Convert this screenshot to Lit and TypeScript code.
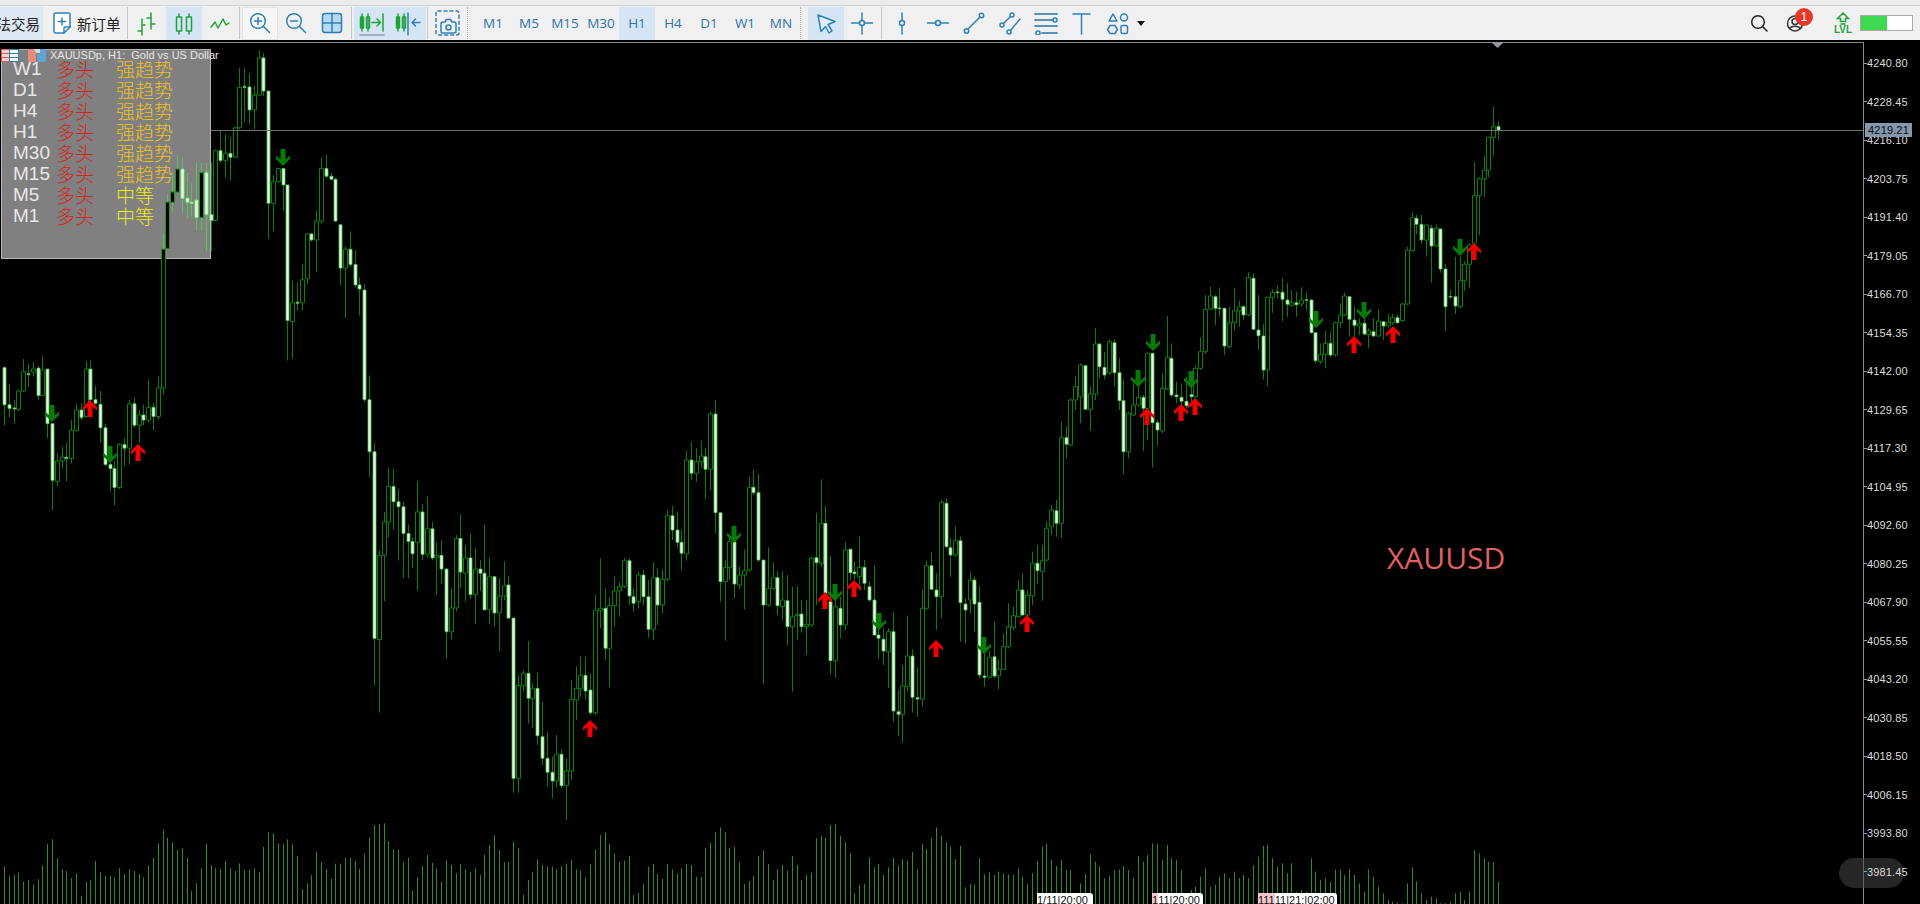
import { LitElement, css, html, svg } from "lit";
import { customElement } from "lit/decorators.js";

// Candles are traced from the reference. Each segment has its own y scale:
// page y = offset + value / scale. Rows are "kind top bottom high low".
const SEGMENTS = [
  {
    offset: 40,
    scale: 1.96,
    rows: "w 642 715 640 755;w 715 722 675 740;w 721 723 705 752;b 688 724 685 727;b 650 688 625 690;w 654 656 635 680;b 645 651 632 660;w 643 697 640 705;b 647 697 620 697;w 645 752 645 780;w 752 863 752 922;b 825 865 810 875;b 818 825 797 838;w 818 820 790 865;b 765 820 745 830;b 725 765 712 768;w 725 740 712 745;b 645 738 630 740;w 645 705 628 720;w 705 712 678 715;w 714 760 688 790;w 760 832 752 835;w 832 840 815 885;w 840 877 825 912;b 793 877 790 880;w 793 800 780 835;b 713 800 705 832;w 713 755 700 760;b 735 755 725 790;w 735 745 715 755;b 720 745 665 750;w 720 738 712 765;b 682 738 660 745;b 410 682 380 695;b 318 408 300 408;b 298 318 265 340;b 253 298 225 298;w 253 310 230 340;w 310 318 260 350;w 318 320 280 345;w 314 348 240 375;b 260 348 240 375;w 260 342 240 415;w 342 354 240 415;b 217 354 215 356;w 217 236 178 240;b 222 236 185 270;w 222 230 190 275;b 172 230 170 232;b 93 172 55 175;w 91 93 55 160;w 92 137 65 165;b 108 137 90 175;b 35 108 20 108;w 35 100 25 110;w 100 320 100 390;b 278 320 265 375;b 252 278 250 280;w 252 284 252 335;w 284 550 284 628;b 515 552 472 625;w 514 516 475 530;b 470 515 440 530;b 380 468 378 478;w 380 392 378 395;b 355 392 335 455;b 252 355 230 360;w 252 267 225 270;w 267 273 260 275;w 273 355 270 357;w 362 447 362 480;b 410 447 405 545;w 410 440 375 445;w 440 480 412 485;w 480 488 465 540;w 490 705 478 710;w 705 807 658 857;w 807 1173 790 1265;b 1010 1175 1000 1318;b 945 1010 925 1100;b 875 945 838 975;w 875 905 840 960;w 905 915 880 1020;w 915 967 905 1055;w 967 983 950 1055;w 983 1007 975 1035;b 925 985 865 1078;w 925 1008 910 1020;b 958 1008 895 1015;w 958 1015 945 1020;b 1010 1014 985 1088;w 1010 1037 980 1065;w 1037 1160 1035 1212;b 1113 1160 1075 1175;b 977 1113 970 1120;w 977 1043 930 1075;b 1015 1045 990 1100;w 1015 1087 968 1095;b 1037 1087 995 1145;w 1037 1045 1020 1080;w 1045 1117 950 1115;b 1052 1117 1015 1145;w 1052 1123 1050 1150;b 1090 1123 1055 1198;b 1070 1090 1022 1098;w 1068 1133 1050 1135;w 1133 1447 1133 1475;b 1265 1447 1245 1475",
  },
  {
    offset: 380,
    scale: 3,
    rows: "b 880 918 870 935;w 880 955 783 1030;b 925 955 910 1045;w 925 1067 878 1095;w 1070 1135 965 1155;w 1135 1177 1055 1220;w 1177 1203 1130 1255;b 1123 1203 1065 1222;w 1123 1217 1108 1225;b 1173 1217 1135 1320;b 958 1173 900 1200;b 925 960 860 1020;b 886 925 828 950;w 886 933 830 960;w 930 998 880 1005;b 690 998 645 1005;b 685 692 535 745;w 685 805 625 840;b 677 805 652 922;b 633 677 590 740;b 620 632 605 710;b 542 620 533 625;w 542 648 535 675;w 650 670 625 695;b 585 665 575 685;w 585 650 570 675;w 650 748 600 772;b 593 748 547 780;w 593 675 565 735;b 598 675 570 700;b 407 598 390 605;w 407 450 378 480;w 450 487 395 505;w 487 520 450 570;b 240 522 212 542;w 240 280 187 300;b 245 280 205 305;b 228 245 182 265;w 230 268 205 358;b 102 268 95 330;w 102 398 60 460;w 398 605 398 665;b 562 605 540 782;b 485 562 470 600;w 485 612 440 655;b 585 615 560 628;b 572 585 508 688;b 322 570 290 575;w 322 338 270 345;w 338 540 282 545;w 540 675 540 912;b 625 675 502 680;b 593 625 548 630;w 593 677 575 705;b 660 680 573 722;w 662 740 585 795;b 710 740 620 935;b 703 707 620 780;w 702 740 660 758;b 733 740 660 825;b 535 735 530 740;w 533 548 398 675;b 430 550 298 560;w 430 640 378 665;w 665 842 528 882;b 680 842 640 892;w 685 735 650 775;b 510 735 487 750;w 508 578 505 600;w 576 581 545 600;b 562 590 470 630;w 562 610 540 630;w 620 660 605 665;w 660 765 555 768;w 765 775 700 838;w 778 813 745 855;b 755 815 745 925;w 755 993 695 1025;w 995 1003 930 1068;b 918 1003 855 1088;b 828 920 707 935;w 828 952 808 998;w 953 957 862 1010;b 685 958 630 980;b 557 685 542 690;w 557 628 517 630;w 630 650 580 750;b 367 650 360 715;w 370 500 355 505;w 503 525 475 590;b 482 525 438 530;w 482 668 470 785;w 672 690 655 790;b 600 660 575 700;w 600 672 590 755;w 667 885 617 895;w 888 892 800 920;b 832 892 812 895;w 830 888 725 895;b 868 888 838 928;b 800 868 760 870;b 740 800 670 805;b 707 742 680 750;b 630 710 600 712",
  },
  {
    offset: 240,
    scale: 3,
    rows: "w 1050 1125 1000 1127;b 1065 1125 1050 1130;b 970 1067 935 1095;w 970 992 915 1030;b 962 994 915 1082;b 865 960 845 965;b 810 860 795 885;w 812 850 780 890;b 593 850 545 895;w 593 613 560 655;b 480 615 475 618;b 440 480 410 510;b 375 470 370 550;w 377 508 375 510;b 462 508 440 573;b 312 462 265 480;w 312 380 310 415;w 382 405 335 418;b 305 398 298 405;w 308 398 298 440;w 398 482 355 510;w 482 635 418 703;b 520 635 515 655;b 495 525 430 528;b 472 495 400 500;w 472 505 465 633;b 340 505 338 600;w 340 548 338 682;w 548 570 540 618;b 445 573 400 580;b 352 447 228 450;w 355 465 310 470;w 465 470 425 490;w 472 484 430 495;w 484 497 410 505;w 464 470 420 500;b 385 470 375 475;b 335 385 292 390;b 208 335 165 342;b 168 207 140 210;w 170 205 165 255;w 204 206 143 230;w 205 318 205 345;b 248 320 200 325;b 212 248 145 270;b 200 213 182 260;w 200 225 195 240;b 113 225 97 228;w 115 268 100 270;w 270 287 165 328;w 288 390 252 418;b 172 390 170 438;b 157 172 147 218;w 156 158 135 175;w 157 178 115 243;w 180 193 130 230;b 188 196 152 200;w 188 194 155 230;b 180 192 142 200;w 179 181 155 210;w 180 278 178 280;w 278 362 278 368;b 343 365 310 372;b 310 343 273 385;w 310 345 275 352;b 248 345 245 350;b 225 248 190 265;b 168 225 158 228;w 170 238 168 290;w 240 256 200 290;b 250 258 235 285;w 250 282 225 285;b 272 284 265 325;w 275 288 235 290;b 243 288 210 290;w 245 258 245 300;b 248 258 222 262;b 233 248 222 255;w 233 248 225 252;b 192 242 188 245;b 30 192 20 195",
  },
  {
    offset: 90,
    scale: 3,
    rows: "b 383 482 367 485;w 385 403 375 432;w 403 450 375 462;b 405 450 405 500;w 415 468 405 578;b 415 468 403 470;w 417 537 415 548;w 537 650 522 722;w 619 621 600 627;w 620 648 500 672;b 572 650 500 655;b 523 572 513 602;b 465 523 460 595;b 317 460 217 460;b 266 317 262 435;b 241 267 198 320;b 142 241 140 262;b 110 142 50 197;w 110 120 95 150",
  },
];

// Tops of the volume bars: y = 800 + value / 3
const VOLUMES = [
  200, 228, 224, 218, 245, 240, 254, 238, 196, 132, 118, 175, 208, 213, 235, 220, 288, 245, 240, 183, 217, 228, 228, 232, 205, 222, 208, 213, 222, 232, 196, 173, 130, 90, 113, 128, 150, 145, 173, 273, 250, 205, 132, 196, 205, 207, 183, 205, 213, 190, 210, 210, 205, 217, 140, 97, 100, 130, 133, 118, 133, 168, 267, 250, 225, 155, 186, 207, 237, 191, 191, 175, 173, 182, 207, 162, 113, 75, 72, 70, 123, 148, 150, 187, 173, 272, 232, 198, 165, 188, 205, 245, 181, 195, 220, 193, 208, 217, 205, 225, 165, 135, 106, 150,
  187, 185, 125, 145, 285, 240, 217, 178, 195, 200, 200, 208, 198, 191, 180, 208, 212, 232, 192, 148, 105, 97, 132, 160, 185, 182, 168, 285, 278, 252, 200, 192, 223, 237, 192, 208, 220, 205, 192, 195, 230, 232, 145, 130, 97, 82, 97, 145, 140, 187, 252, 243, 228, 168, 152, 192, 240, 208, 195, 213, 168, 195, 240, 225, 218, 115, 108, 113, 75, 73, 108, 126, 160, 280, 255, 252, 172, 202, 192, 225, 202, 173, 196, 177, 182, 155, 208, 132, 147, 115, 82, 108, 127, 140, 178, 137, 262, 253, 254, 175, 223, 217, 225, 215,
  220, 223, 225, 205, 230, 252, 220, 183, 140, 132, 180, 198, 180, 210, 210, 280, 250, 222, 162, 185, 200, 235, 228, 210, 208, 198, 210, 233, 168, 185, 165, 130, 132, 180, 135, 175, 180, 210, 280, 270, 260, 230, 205, 260, 255, 230, 220, 235, 215, 235, 225, 235, 195, 170, 137, 135, 175, 200, 190, 220, 190, 275, 270, 275, 175, 215, 240, 235, 245, 208, 210, 225, 208, 225, 250, 275, 208, 230, 260, 280, 300, 305, 308, 310, 250, 202, 245, 280, 300, 290, 295, 310, 310, 305, 280, 275, 300, 275, 150, 160, 175, 185, 185, 245,
];

// x, top of the arrow, all in page pixels
const UP_ARROWS = [[90, 400], [138, 444], [590, 720], [825, 592], [854, 580], [936, 640], [1027, 615], [1147, 408], [1181, 404], [1195, 398], [1354, 336], [1393, 326], [1474, 243]];
const DOWN_ARROWS = [[52, 405], [110, 446], [283, 149], [734, 526], [835, 584], [879, 613], [984, 637], [1138, 370], [1153, 334], [1191, 371], [1316, 311], [1364, 302], [1460, 239]];

const PRICES = ["4240.80", "4228.45", "4216.10", "4203.75", "4191.40", "4179.05", "4166.70", "4154.35", "4142.00", "4129.65", "4117.30", "4104.95", "4092.60", "4080.25", "4067.90", "4055.55", "4043.20", "4030.85", "4018.50", "4006.15", "3993.80", "3981.45"];

const TRENDS = [
  ["W1", "强趋势"],
  ["D1", "强趋势"],
  ["H4", "强趋势"],
  ["H1", "强趋势"],
  ["M30", "强趋势"],
  ["M15", "强趋势"],
  ["M5", "中等"],
  ["M1", "中等"],
];

const TIME_TAGS = [
  { left: 1037, width: 56, pink: "", text: "1/11|20:00" },
  { left: 1152, width: 51, pink: "1", text: "11|20:00" },
  { left: 1258, width: 79, pink: "111", text: "11|21:|02:00" },
];

const PANEL = { x: 2, y: 49, w: 209, h: 209 };

function buildPaths() {
  let wicks = "";
  let bull = "";
  let bear = "";
  let i = 0;
  for (const seg of SEGMENTS) {
    const y = (v: number) => (seg.offset + Number(v) / seg.scale).toFixed(1);
    for (const row of seg.rows.split(";")) {
      const [kind, top, bottom, high, low] = row.split(" ");
      const x = Math.round(4 + 4.804 * i) + 0.5;
      wicks += `M${x} ${y(+high)}V${y(+top)}M${x} ${y(+bottom)}V${y(+low)}`;
      if (kind === "b") bull += `M${x - 2} ${y(+top)}h4V${y(+bottom)}h-4z`;
      else bear += `M${x - 1.5} ${y(+top)}h3V${y(+bottom)}h-3z`;
      i++;
    }
  }
  return { wicks, bull, bear };
}

function buildVolumes() {
  return VOLUMES.map((top, i) => {
    const x = Math.round(4 + 4.804 * i) + 0.5;
    return `M${x} ${(800 + top / 3).toFixed(1)}V904`;
  }).join("");
}

const PATHS = buildPaths();
const VOLUME_PATH = buildVolumes();

const arrowUp = ([x, t]: number[]) =>
  `M${x} ${t}L${x + 7} ${t + 7}V${t + 10.5}L${x + 2.5} ${t + 6.5}V${t + 17}H${x - 2.5}V${t + 6.5}L${x - 7} ${t + 10.5}V${t + 7}Z`;
const arrowDown = ([x, t]: number[]) =>
  `M${x} ${t + 17}L${x + 7} ${t + 10}V${t + 6.5}L${x + 2.5} ${t + 10.5}V${t}H${x - 2.5}V${t + 10.5}L${x - 7} ${t + 6.5}V${t + 10}Z`;

const BLUE = "#2f80b8";
const GREEN = "#1fa33a";

const icon = (content: unknown, size = 24) =>
  html`<svg width=${size} height=${size} viewBox="0 0 ${size} ${size}" fill="none" stroke-width="1.5" stroke-linecap="round" stroke-linejoin="round">${content}</svg>`;

const ICONS = {
  order: icon(svg`<path d="M6 2h12a2 2 0 0 1 2 2v12l-6 6H6a2 2 0 0 1-2-2V4a2 2 0 0 1 2-2z" stroke=${BLUE} fill="#fff"/><path d="M14 22v-5a1 1 0 0 1 1-1h5" stroke=${BLUE}/><path d="M12 7v7M8.500 10.500h7" stroke=${BLUE}/>`),
  bars: icon(svg`<path d="M7 9v16M3 21h4M7 15h3M16 3v16M12 8h4M16 14h4" stroke=${GREEN}/>`, 26),
  candles: icon(svg`<path d="M7 3v20M17 3v20" stroke=${GREEN}/><rect x="4.500" y="6" width="5" height="14" fill="#d6e5f3" stroke=${GREEN}/><rect x="14.500" y="6" width="5" height="14" fill="#d6e5f3" stroke=${GREEN}/>`),
  line: icon(svg`<path d="M3 16l4-5 3 6 5-9 3 6 3-2" stroke=${GREEN}/>`),
  zoomIn: icon(svg`<circle cx="10" cy="10" r="7.300" stroke=${BLUE}/><path d="M15.500 15.500l6 6M10 6.500v7M6.500 10h7" stroke=${BLUE}/>`),
  zoomOut: icon(svg`<circle cx="10" cy="10" r="7.300" stroke=${BLUE}/><path d="M15.500 15.500l6 6M6.500 10h7" stroke=${BLUE}/>`),
  grid: icon(svg`<rect x="2.500" y="2.500" width="19" height="19" rx="2.500" fill="#b9dbf2" stroke=${BLUE}/><path d="M12 2.500v19M2.500 12h19" stroke=${BLUE}/>`),
  autoScroll: icon(svg`<path d="M4 5v17M10 5v17" stroke=${GREEN}/><rect x="2.500" y="8" width="3" height="11" fill=${GREEN} stroke=${GREEN}/><rect x="8.500" y="8" width="3" height="11" fill="none" stroke=${GREEN}/><path d="M14 13.500h8M19 10l3.500 3.500-3.500 3.500M25 5v17" stroke=${GREEN}/><path d="M2 26h24" stroke="#8e9aa5"/>`, 28),
  shiftBack: icon(svg`<path d="M4 5v17M10 5v17" stroke=${GREEN}/><rect x="2.500" y="8" width="3" height="11" fill=${GREEN} stroke=${GREEN}/><rect x="8.500" y="8" width="3" height="11" fill="none" stroke=${GREEN}/><path d="M14 4v22" stroke=${BLUE}/><path d="M26 13.500h-8M21.500 10L18 13.500l3.500 3.500" stroke=${BLUE}/>`, 28),
  shot: icon(svg`<rect x="2" y="2" width="23" height="24" rx="2" stroke=${BLUE} stroke-dasharray="3 3"/><path d="M9 13h2l1.500-2.500h4L18 13h2a2 2 0 0 1 2 2v7a2 2 0 0 1-2 2H9a2 2 0 0 1-2-2v-7a2 2 0 0 1 2-2z" fill="#f0f0f0" stroke=${BLUE}/><circle cx="14.500" cy="18.500" r="2.500" stroke=${BLUE}/>`, 28),
  cursor: icon(svg`<path d="M4 4l17 6.500-7 3 4 6.500-3 2-3.500-6.500-4.500 5z" stroke=${BLUE} fill="#e4eef7"/>`),
  cross: icon(svg`<circle cx="12" cy="12" r="2.500" stroke=${BLUE}/><path d="M12 2v7.500M12 14.500V23M1.500 12h8M14.500 12h8" stroke=${BLUE}/>`),
  vline: icon(svg`<circle cx="12" cy="12" r="2.500" stroke=${BLUE}/><path d="M12 2v7.500M12 14.500V23" stroke=${BLUE}/>`),
  hline: icon(svg`<circle cx="12" cy="12" r="2.500" stroke=${BLUE}/><path d="M1.500 12h8M14.500 12h8" stroke=${BLUE}/>`),
  trend: icon(svg`<circle cx="4.500" cy="20" r="2.200" stroke=${BLUE}/><circle cx="19.500" cy="4.500" r="2.200" stroke=${BLUE}/><path d="M6 18L18 6" stroke=${BLUE}/>`),
  channel: icon(svg`<circle cx="4" cy="14" r="2" stroke=${BLUE}/><circle cx="14" cy="4" r="2" stroke=${BLUE}/><circle cx="11" cy="21" r="2" stroke=${BLUE}/><path d="M5.500 12.500L12.500 5.500M12.500 19.500L22 8" stroke=${BLUE}/>`),
  fibo: icon(svg`<path d="M1 3h22M1 9h18M1 15h22M8 22h15" stroke="#5b8fb5" stroke-width="1.800"/><circle cx="21" cy="9" r="2" stroke=${BLUE} fill="#f0f0f0"/><circle cx="4" cy="22" r="2" stroke=${BLUE}/>`),
  text: icon(svg`<path d="M3 3h17M11.500 3v20" stroke=${BLUE}/>`),
  shapes: icon(svg`<path d="M7 3l4 7H3z" stroke=${BLUE}/><circle cx="18" cy="6.500" r="3.500" stroke=${BLUE}/><path d="M4 14.500h5l2.500 4-2.500 4H4l-2.500-4z" stroke=${BLUE}/><rect x="15" y="14.500" width="6.500" height="8" rx="1.500" stroke=${BLUE}/>`),
  search: icon(svg`<circle cx="11" cy="11" r="6.300" stroke="#222"/><path d="M15.500 15.500l4.500 4.500" stroke="#222"/>`),
  user: icon(svg`<circle cx="12" cy="12.500" r="7.500" stroke="#333"/><circle cx="12" cy="10.500" r="3" stroke="#333"/><path d="M6.500 17.500c2-3 9-3 11 0" stroke="#333"/>`),
  lvl: html`<svg width="14" height="13" viewBox="0 0 14 13" fill="none" stroke-width="1.500"><path d="M7 1L1.500 6.500H4.500V9.500H9.500V6.500H12.500zM4.500 12H9.500" stroke="#1fa33a"/></svg>`,
};

@customElement("app-root")
export class AppRoot extends LitElement {
  static styles = css`
    :host {
      display: block;
      width: 1920px;
      height: 904px;
      overflow: hidden;
      background: #000;
      font-family: "Liberation Sans", sans-serif;
    }

    .app {
      display: flex;
      flex-direction: column;
      height: 904px;
    }

    .menu-edge {
      height: 5px;
      background: #ececec;
      border-bottom: 1px solid #d2d2d2;
    }

    .toolbar {
      display: flex;
      align-items: center;
      height: 34px;
      background: #f0f0f0;
      color: #222;
    }

    .cell {
      position: relative;
      display: flex;
      align-items: center;
      justify-content: center;
      flex: none;
      width: 36px;
      height: 33px;
    }

    .cell.on {
      background: #d6e5f3;
    }

    .cell.box {
      background: #f6f6f6;
      box-shadow: inset 0 0 0 1px #e4e4e4;
    }

    .sep {
      flex: none;
      width: 1px;
      height: 32px;
      margin: 0 2px 0 1px;
      background: #c8c8c8;
    }

    .sep.grip {
      background: none;
      border-left: 1px dotted #b4b4b4;
    }

    .algo {
      display: flex;
      justify-content: flex-end;
      align-items: center;
      flex: none;
      width: 43px;
      height: 33px;
      padding-right: 3px;
      box-sizing: border-box;
      overflow: hidden;
      background: #dde8f3;
      font: 14.5px "Noto Sans CJK SC", sans-serif;
      white-space: nowrap;
    }

    .new-order {
      display: flex;
      align-items: center;
      gap: 3px;
      flex: none;
      width: 79px;
      height: 33px;
      margin-left: 4px;
      padding-left: 3px;
      box-sizing: border-box;
      font: 14.5px "Noto Sans CJK SC", sans-serif;
      white-space: nowrap;
    }

    .frames {
      display: flex;
      margin-left: 4px;
    }

    .tf {
      font: 13.5px "Open Sans", sans-serif;
      color: #2c73a8;
    }

    .tri {
      width: 0;
      height: 0;
      margin-left: 1px;
      border: 4px solid transparent;
      border-top: 5px solid #111;
      border-bottom: 0;
    }

    .status {
      display: flex;
      align-items: center;
      margin-left: auto;
      margin-right: 7px;
    }

    .badge {
      position: absolute;
      top: 1px;
      left: 18px;
      width: 18px;
      height: 18px;
      border-radius: 50%;
      background: #e2392a;
      color: #fff;
      font: 12px/18px "Liberation Sans", sans-serif;
      text-align: center;
    }

    .lvl {
      display: flex;
      flex-direction: column;
      align-items: center;
      width: 32px;
      margin-left: 14px;
      color: #1fa33a;
      font: bold 10px/10px "Liberation Sans", sans-serif;
    }

    .battery {
      display: flex;
      width: 53px;
      height: 16px;
      margin-left: 1px;
      box-sizing: border-box;
      border: 1px solid #a9a9a9;
      background: #fff;
    }

    .battery i {
      width: 26px;
      background: #3ed94e;
    }

    .main {
      position: relative;
      display: flex;
      flex: 1;
      min-height: 0;
      background: #000;
    }

    .plot {
      position: relative;
      flex: 1;
      overflow: hidden;
    }

    .plot > svg {
      display: block;
    }

    .title {
      position: absolute;
      top: 8px;
      left: 1px;
      display: flex;
      align-items: center;
      gap: 9px;
      color: #e6e6e6;
      font-size: 11px;
      line-height: 14px;
      white-space: pre;
    }

    .title span {
      margin-left: -5px;
    }

    .panel {
      position: absolute;
      top: 18px;
      left: 13px;
      display: grid;
      grid-template-columns: 43px 60px auto;
      grid-auto-rows: 21px;
      align-items: center;
      font-size: 19px;
      color: #e8e8e8;
    }

    .panel .dir {
      color: #d8201e;
      font-family: "Noto Sans CJK SC", sans-serif;
      font-weight: 300;
    }

    .panel .strong,
    .panel .mid {
      font-family: "Noto Sans CJK SC", sans-serif;
      font-weight: 300;
    }

    .panel .strong {
      color: #eec020;
    }

    .panel .mid {
      color: #eeee10;
    }

    .note {
      position: absolute;
      top: 503px;
      left: 1387px;
      color: #e06060;
      font: 30px/30px "Open Sans", sans-serif;
    }

    .tag {
      position: absolute;
      top: 853px;
      display: flex;
      height: 14px;
      overflow: hidden;
      background: #fff;
      border-radius: 0 3px 0 0;
      color: #111;
      font-size: 11px;
      line-height: 14px;
      white-space: nowrap;
    }

    .tag b {
      font-weight: 400;
      background: #f6c6cc;
    }

    .axis {
      position: relative;
      z-index: 1;
      flex: none;
      width: 56px;
      padding-top: 3.75px;
      box-sizing: border-box;
      color: #dcdcdc;
      font-size: 11px;
      letter-spacing: 0.15px;
    }

    .axis div {
      display: flex;
      align-items: center;
      height: 38.5px;
    }

    .axis div::before {
      content: "";
      width: 3px;
      height: 1px;
      background: #9a9a9a;
    }

    .axis .now {
      position: absolute;
      top: 83px;
      left: 1px;
      width: 47px;
      height: 14px;
      background: #8497ac;
      color: #0c0c0c;
      font-size: 11px;
      line-height: 14px;
      text-align: center;
    }

    .pill {
      position: absolute;
      top: 818px;
      left: 1839px;
      width: 65px;
      height: 30px;
      border-radius: 15px;
      background: rgba(70, 70, 70, 0.55);
    }
  `;

  private renderChart() {
    const { x, y, w, h } = PANEL;
    return svg`
      <defs>
        <clipPath id="in-panel"><rect x=${x} y=${y} width=${w} height=${h}></rect></clipPath>
      </defs>
      <rect x=${x - 0.5} y=${y + 0.5} width=${w} height=${h} fill="#808080" stroke="#b4b4b4"></rect>
      <path d=${VOLUME_PATH} stroke="#2f8a2f" fill="none"></path>
      <path d=${PATHS.wicks} stroke="#0f7a0f" fill="none"></path>
      <path d=${PATHS.bull} stroke="#0f7f0f" fill="#000"></path>
      <path d=${PATHS.bear} stroke="#4fc04f" stroke-width="0.800" fill="#e4ffe4"></path>
      <g clip-path="url(#in-panel)">
        <path d=${PATHS.wicks} stroke="#5fbf5f" fill="none"></path>
        <path d=${PATHS.bull} stroke="#2f8f2f" fill="#000"></path>
        <path d=${PATHS.bear} stroke="#8fe08f" stroke-width="0.800" fill="#e4ffe4"></path>
      </g>
      <path d="M211 130.500H1864" stroke="#707070"></path>
      <path d="M0 42.500H1864M1863.500 42V904" stroke="#8a8a8a"></path>
      <path d="M1491 42h13l-6.500 6z" fill="#8f9aa6"></path>
      <path d=${DOWN_ARROWS.map(arrowDown).join("")} fill="#087a08"></path>
      <path d=${UP_ARROWS.map(arrowUp).join("")} fill="#f40000"></path>
    `;
  }

  render() {
    return html`
      <div class="app">
        <div class="menu-edge"></div>
        <div class="toolbar">
          <div class="algo">法交易</div>
          <div class="new-order">${ICONS.order}<span>新订单</span></div>
          <div class="sep"></div>
          <div class="cell">${ICONS.bars}</div>
          <div class="cell on">${ICONS.candles}</div>
          <div class="cell">${ICONS.line}</div>
          <div class="sep"></div>
          <div class="cell box">${ICONS.zoomIn}</div>
          <div class="cell">${ICONS.zoomOut}</div>
          <div class="cell">${ICONS.grid}</div>
          <div class="sep"></div>
          <div class="cell on">${ICONS.autoScroll}</div>
          <div class="cell on">${ICONS.shiftBack}</div>
          <div class="sep"></div>
          <div class="cell">${ICONS.shot}</div>
          <div class="sep grip"></div>
          <div class="frames">
            ${["M1", "M5", "M15", "M30", "H1", "H4", "D1", "W1", "MN"].map(
              (tf) => html`<div class="cell tf ${tf === "H1" ? "on" : ""}">${tf}</div>`
            )}
          </div>
          <div class="sep grip"></div>
          <div class="frames">
            <div class="cell on">${ICONS.cursor}</div>
            <div class="cell">${ICONS.cross}</div>
          </div>
          <div class="sep"></div>
          <div class="cell">${ICONS.vline}</div>
          <div class="cell">${ICONS.hline}</div>
          <div class="cell">${ICONS.trend}</div>
          <div class="cell">${ICONS.channel}</div>
          <div class="cell">${ICONS.fibo}</div>
          <div class="cell">${ICONS.text}</div>
          <div class="cell">${ICONS.shapes}</div>
          <div class="tri"></div>
          <div class="status">
            <div class="cell">${ICONS.search}</div>
            <div class="cell">${ICONS.user}<span class="badge">1</span></div>
            <div class="lvl">${ICONS.lvl}LVL</div>
            <div class="battery"><i></i></div>
          </div>
        </div>
        <div class="main">
          <div class="plot">
            <svg width="1864" height="864" viewBox="0 40 1864 864">${this.renderChart()}</svg>
            <div class="title">
              <svg width="18" height="13" viewBox="0 0 18 13" fill="none">
                <rect x="0.500" y="0.500" width="8" height="12" fill="#f4d0d0" stroke="#e05a4e"></rect>
                <path d="M1 4.500h7M1 8.500h7" stroke="#e05a4e"></path>
                <rect x="8.500" y="0.500" width="9" height="12" fill="#fff" stroke="#2f80b8"></rect>
                <path d="M9 4.500h8M9 8.500h8" stroke="#2f80b8"></path>
              </svg>
              <svg width="18" height="13" viewBox="0 0 18 13">
                <path d="M0 0h6l2 4v9H0z" fill="#e98a80"></path>
                <path d="M6 0h6v4H8z" fill="#d8d8d8"></path>
                <path d="M12 0h6v13H9V5h3z" fill="#5da6d6"></path>
              </svg>
              <span>XAUUSDp, H1:  Gold vs US Dollar</span>
            </div>
            <div class="panel">
              ${TRENDS.map(
                ([tf, level]) => html`
                  <div>${tf}</div>
                  <div class="dir">多头</div>
                  <div class=${level === "中等" ? "mid" : "strong"}>${level}</div>
                `
              )}
            </div>
            <div class="note">XAUUSD</div>
            ${TIME_TAGS.map(
              (t) => html`<div class="tag" style="left:${t.left}px;width:${t.width}px"><b>${t.pink}</b>${t.text}</div>`
            )}
          </div>
          <div class="axis">
            ${PRICES.map((p) => html`<div>${p}</div>`)}
            <span class="now">4219.21</span>
          </div>
          <div class="pill"></div>
        </div>
      </div>
    `;
  }
}

declare global {
  interface HTMLElementTagNameMap {
    "app-root": AppRoot;
  }
}
